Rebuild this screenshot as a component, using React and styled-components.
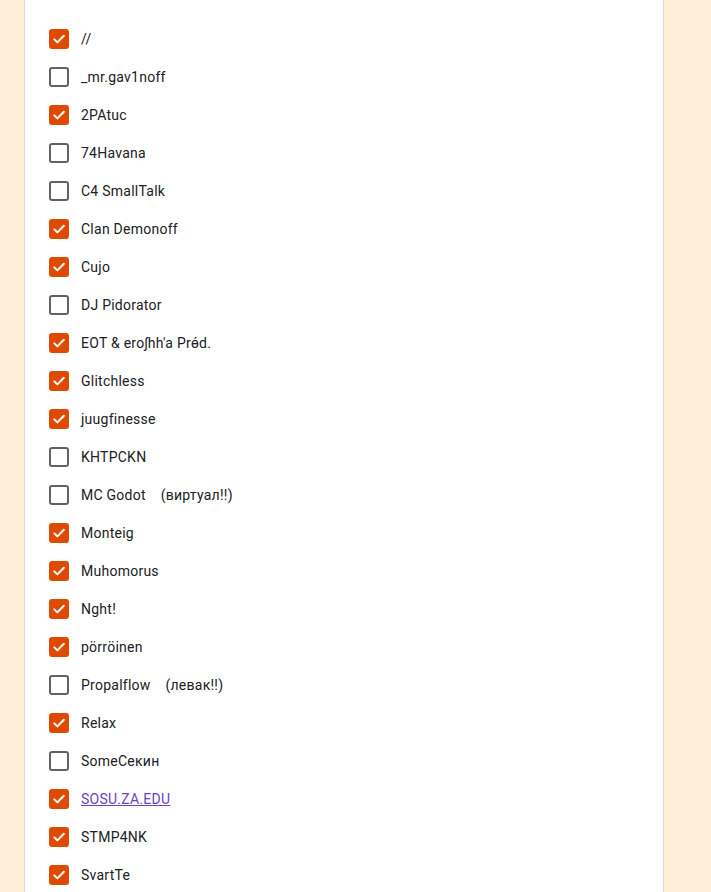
import React from "react";
import styled, { createGlobalStyle } from "styled-components";

const Global = createGlobalStyle`
    html, body {
        margin: 0;
        padding: 0;
        background: #feeed8;
        font-family: Roboto, "Liberation Sans", Arial, sans-serif;
    }
`;

const Page = styled.div`
    display: flex;
    padding-left: 24px;
    min-height: 892px;
`;

const Card = styled.section`
    box-sizing: border-box;
    width: 640px;
    background: #ffffff;
    border-left: 1px solid #dadce0;
    border-right: 1px solid #dadce0;
    padding: 20px 24px 40px;
`;

const List = styled.div`
    display: flex;
    flex-direction: column;
`;

const Row = styled.label`
    display: flex;
    align-items: center;
    height: 38px;
    gap: 12px;
    cursor: pointer;
`;

const Box = styled.span`
    box-sizing: border-box;
    width: 20px;
    height: 20px;
    border-radius: 3px;
    display: flex;
    align-items: center;
    justify-content: center;
    flex-shrink: 0;
    background: ${(p) => (p.$checked ? "#e04a00" : "transparent")};
    border: ${(p) => (p.$checked ? "none" : "2px solid #5f6368")};
`;

const Label = styled.span`
    font-size: 14px;
    color: #202124;
    white-space: pre;
    letter-spacing: 0.25px;
`;

const LinkLabel = styled.a`
    font-size: 14px;
    color: #6f3fc8;
    text-decoration: underline;
    letter-spacing: 0.25px;
`;

const Check = () => (
    <svg width="14" height="14" viewBox="0 0 14 14">
        <path d="M2.3 7.4 L5.4 10.4 L11.8 3.8" fill="none" stroke="#fff" strokeWidth="2" strokeLinecap="round" strokeLinejoin="round" />
    </svg>
);

const items = [
    ["//", true],
    ["_mr.gav1noff", false],
    ["2PAtuc", true],
    ["74Havana", false],
    ["C4 SmallTalk", false],
    ["Clan Demonoff", true],
    ["Cujo", true],
    ["DJ Pidorator", false],
    ["EOT & eroʃhh'a Prɵ́d.", true],
    ["Glitchless", true],
    ["juugfinesse", true],
    ["KHTPCKN", false],
    ["MC Godot    (виртуал!!)", false],
    ["Monteig", true],
    ["Muhomorus", true],
    ["Nght!", true],
    ["pörröinen", true],
    ["Propalflow    (левак!!)", false],
    ["Relax", true],
    ["SomeСекин", false],
    ["SOSU.ZA.EDU", true, true],
    ["STMP4NK", true],
    ["SvartTe", true],
];

export default function App() {
    return <>
        <Global />
        <Page>
            <Card>
                <List>
                    {items.map(([name, checked, link]) => (
                        <Row key={name}>
                            <Box $checked={checked}>{checked && <Check />}</Box>
                            {link ? <LinkLabel href="#">{name}</LinkLabel> : <Label>{name}</Label>}
                        </Row>
                    ))}
                </List>
            </Card>
        </Page>
    </>;
}
